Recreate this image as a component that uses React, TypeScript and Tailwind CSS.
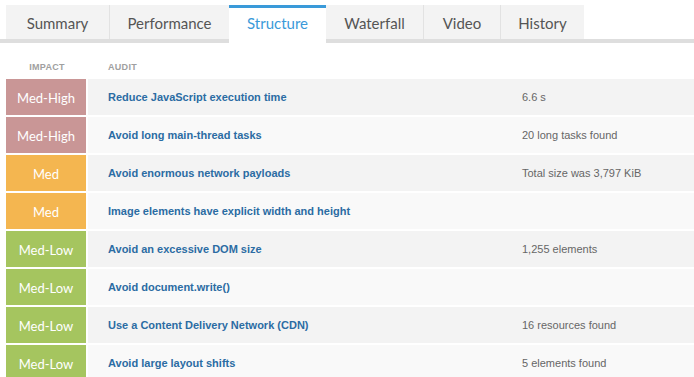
const tabs = [
  { label: 'Summary', w: 'w-[103px]' },
  { label: 'Performance', w: 'w-[120px]' },
  { label: 'Structure', w: 'w-[97px]', active: true },
  { label: 'Waterfall', w: 'w-[97px]' },
  { label: 'Video', w: 'w-[77px]' },
  { label: 'History', w: 'w-[84px]' },
];

type Impact = 'Med-High' | 'Med' | 'Med-Low';

const impactColor: Record<Impact, string> = {
  'Med-High': 'bg-[#c99696]',
  Med: 'bg-[#f4b650]',
  'Med-Low': 'bg-[#a5c55f]',
};

const audits: { impact: Impact; title: string; detail: string }[] = [
  { impact: 'Med-High', title: 'Reduce JavaScript execution time', detail: '6.6 s' },
  { impact: 'Med-High', title: 'Avoid long main-thread tasks', detail: '20 long tasks found' },
  { impact: 'Med', title: 'Avoid enormous network payloads', detail: 'Total size was 3,797 KiB' },
  { impact: 'Med', title: 'Image elements have explicit width and height', detail: '' },
  { impact: 'Med-Low', title: 'Avoid an excessive DOM size', detail: '1,255 elements' },
  { impact: 'Med-Low', title: 'Avoid document.write()', detail: '' },
  { impact: 'Med-Low', title: 'Use a Content Delivery Network (CDN)', detail: '16 resources found' },
  { impact: 'Med-Low', title: 'Avoid large layout shifts', detail: '5 elements found' },
];

export default function App() {
  return (
    <div className="h-[377px] w-[694px] overflow-hidden bg-white pt-[5px] font-['Liberation_Sans',Arial,sans-serif]">
      {/* Tabs */}
      <div className="flex border-b-4 border-[#dedede] pl-[6px]">
        {tabs.map((t, i) => (
          <div
            key={t.label}
            className={
              t.active
                ? `${t.w} -mb-[4px] flex h-[38px] items-start justify-center border-t-[3px] border-[#3a9ad9] bg-white pt-[3px] font-['Lato',sans-serif] text-[15px] leading-[24px] text-[#3a9ad9]`
                : `${t.w} flex h-[34px] items-center justify-center bg-[#f3f3f3] pt-[2px] font-['Lato',sans-serif] text-[15px] leading-[24px] text-[#555] ${i > 0 && !tabs[i - 1].active ? 'border-l border-[#e2e2e2]' : ''}`
            }
          >
            {t.label}
          </div>
        ))}
      </div>

      {/* Column headings */}
      <div className="flex h-[36px] items-end pb-[5px] pl-[6px] text-[9px] font-bold tracking-[0.3px] text-[#a0a0a0]">
        <div className="w-[82px] text-center">IMPACT</div>
        <div className="pl-[20px]">AUDIT</div>
      </div>

      {/* Rows */}
      <div className="flex flex-col gap-[2px] pl-[6px]">
        {audits.map((a, i) => (
          <div key={a.title} className="flex h-[36px] gap-[2px]">
            <div
              className={`${impactColor[a.impact]} flex w-[80px] items-center justify-center pt-[3px] font-['Lato',sans-serif] text-[13px] text-white`}
            >
              {a.impact}
            </div>
            <div
              className={`flex flex-1 items-center text-[11px] ${i % 2 === 0 ? 'bg-[#f3f3f3]' : 'bg-[#f9f9f9]'}`}
            >
              <div className="w-[434px] pl-[20px] font-bold text-[#2b6ca3]">{a.title}</div>
              <div className="text-[#666]">{a.detail}</div>
            </div>
          </div>
        ))}
      </div>
    </div>
  );
}
